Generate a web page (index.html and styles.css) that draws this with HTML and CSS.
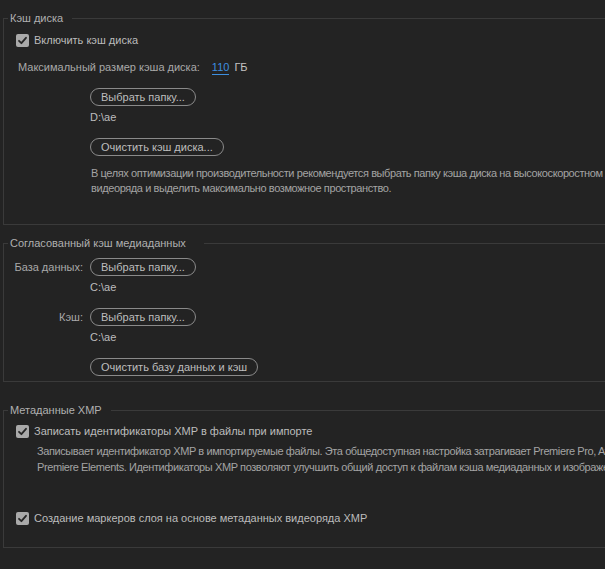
FILE: index.html
```html
<!DOCTYPE html>
<html lang="ru">
<head>
  <meta charset="UTF-8">
  <title>Кэш мультимедиа</title>
  <link rel="stylesheet" href="styles.css">
</head>
<body>
  <fieldset class="group group-disk">
    <legend>Кэш диска</legend>

    <label class="check-row">
      <span class="check"><svg viewBox="0 0 13 13" width="13" height="13"><path d="M3 6.8 L5.4 9.2 L10 3.8" fill="none" stroke="#262626" stroke-width="1.8" stroke-linecap="round" stroke-linejoin="round"/></svg></span>
      Включить кэш диска
    </label>

    <div class="size-row">
      Максимальный размер кэша диска:
      <span class="value">110</span>
      <span class="unit">ГБ</span>
    </div>

    <button class="btn btn-first">Выбрать папку...</button>
    <div class="path">D:\ae</div>
    <button class="btn">Очистить кэш диска...</button>

    <p class="desc desc-disk">В целях оптимизации производительности рекомендуется выбрать папку кэша диска на высокоскоростном диске для<br>видеоряда и выделить максимально возможное пространство.</p>
  </fieldset>

  <fieldset class="group group-media">
    <legend>Согласованный кэш медиаданных</legend>

    <div class="field-row field-first">
      <span class="field-label">База данных:</span>
      <button class="btn btn-inline">Выбрать папку...</button>
    </div>
    <div class="path">C:\ae</div>

    <div class="field-row">
      <span class="field-label">Кэш:</span>
      <button class="btn btn-inline">Выбрать папку...</button>
    </div>
    <div class="path">C:\ae</div>

    <button class="btn">Очистить базу данных и кэш</button>
  </fieldset>

  <fieldset class="group group-xmp">
    <legend>Метаданные XMP</legend>

    <label class="check-row check-xmp">
      <span class="check"><svg viewBox="0 0 13 13" width="13" height="13"><path d="M3 6.8 L5.4 9.2 L10 3.8" fill="none" stroke="#262626" stroke-width="1.8" stroke-linecap="round" stroke-linejoin="round"/></svg></span>
      Записать идентификаторы XMP в файлы при импорте
    </label>

    <p class="desc desc-xmp">Записывает идентификатор XMP в импортируемые файлы. Эта общедоступная настройка затрагивает Premiere Pro, After Effects и<br>Premiere Elements. Идентификаторы XMP позволяют улучшить общий доступ к файлам кэша медиаданных и изображений.</p>

    <label class="check-row check-markers">
      <span class="check"><svg viewBox="0 0 13 13" width="13" height="13"><path d="M3 6.8 L5.4 9.2 L10 3.8" fill="none" stroke="#262626" stroke-width="1.8" stroke-linecap="round" stroke-linejoin="round"/></svg></span>
      Создание маркеров слоя на основе метаданных видеоряда XMP
    </label>
  </fieldset>
</body>
</html>
```
FILE: styles.css
```css
html, body {margin: 0; padding: 0; background: #232323; overflow: hidden;}
body {color: #b4b4b4; font: 11px/16px "Liberation Sans", Arial, sans-serif;}
button {font: inherit;}

.group {margin: 10px -300px 0 3px; padding: 0; border: 1px solid #3a3a3a; min-width: 0;}
.group legend {margin-left: 4px; padding: 0 9px 0 2px; line-height: 16px; color: #b0b0b0;}
.group-disk {padding-bottom: 28px;}
.group-media {padding-bottom: 5px;}
.group-media legend {padding-right: 18px;}
.group-xmp {margin-top: 20px; padding-bottom: 19px;}

.check-row {display: flex; align-items: center; gap: 5px; height: 20px; margin-top: 4px; padding-left: 12px; color: #bcbcbc;}
.check {display: flex; width: 13px; height: 13px; border-radius: 2px; background: #a9a9a9;}

.size-row {display: flex; align-items: center; height: 20px; margin-top: 7px; padding-left: 14px; color: #a9a9a9;}
.value {margin-left: 12px; color: #3d8fe0; border-bottom: 1px solid #3d8fe0; line-height: 14px;}
.unit {margin-left: 5px; color: #c4c4c4;}

.btn {display: block; height: 18px; margin: 13px 0 0 86px; padding: 0 10px; border: 1px solid #8a8a8a; border-radius: 9px; background: transparent; color: #bebebe; line-height: 16px; cursor: pointer;}
.btn-first {margin-top: 11px;}
.btn-inline {margin: 0;}

.path {margin: 3px 0 0 86px; color: #bdbdbd;}

.desc {margin: 0; white-space: nowrap; letter-spacing: -0.4px; color: #a4a4a4;}
.desc-disk {margin: 10px 0 0 87px; line-height: 15px;}
.desc-xmp {margin: 2px 0 0 33px;}

.field-row {display: flex; align-items: center; gap: 7px; margin-top: 13px;}
.field-first {margin-top: 7px;}
.field-label {width: 79px; text-align: right; color: #a9a9a9;}

.check-xmp {margin-top: 3px;}
.check-markers {margin-top: 33px;}
```
